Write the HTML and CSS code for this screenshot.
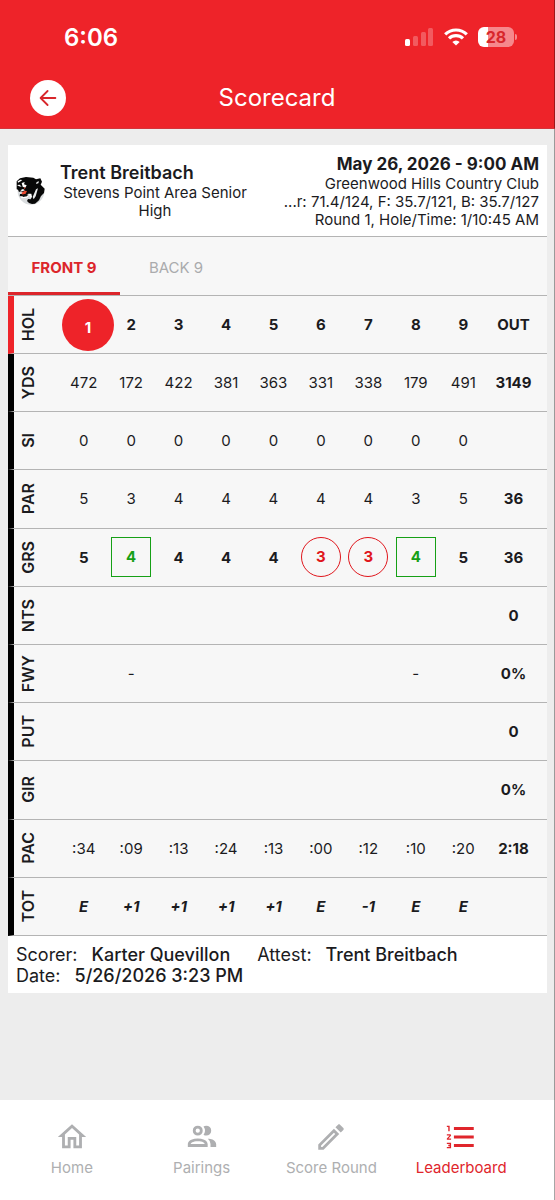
FILE: index.html
```html
<!DOCTYPE html>
<html lang="en">
<head>
  <meta charset="UTF-8" />
  <title>Scorecard</title>
  <meta name="viewport" content="width=device-width, initial-scale=1.0" />
  <link rel="stylesheet" href="styles.css">
</head>
<body>
  <header class="header">
    <div class="status-bar">
      <span class="clock">6:06</span>
      <div class="status-icons">
        <svg width="29" height="19" viewBox="0 0 29 19" fill="#fff">
          <rect x="0" y="11" width="5" height="7" rx="1.5" />
          <g opacity="0.25">
            <rect x="8" y="8" width="5" height="10" rx="1.5" />
            <rect x="16" y="4" width="5" height="14" rx="1.5" />
            <rect x="23" y="0" width="5" height="18" rx="1.5" />
          </g>
        </svg>
        <svg width="24" height="18" viewBox="0 0 24 18" fill="none" stroke="#fff" stroke-width="3.2">
          <path d="M1.2 6.4a15.5 15.5 0 0 1 21.6 0" />
          <path d="M5 10.4a10 10 0 0 1 14 0" />
          <path d="M12 17.6L8.3 13.9a5.3 5.3 0 0 1 7.4 0z" fill="#fff" stroke="none" />
        </svg>
        <div class="battery"><span class="battery-level">28</span></div>
      </div>
    </div>
    <div class="title-bar">
      <button type="button" class="back" aria-label="Back">
        <svg width="18" height="18" viewBox="0 0 18 18" fill="none" stroke="#d8262b" stroke-width="1.8" stroke-linecap="round" stroke-linejoin="round">
          <path d="M16.4 9H1.8M8.6 2L1.6 9l7 7" />
        </svg>
      </button>
      <h1>Scorecard</h1>
    </div>
  </header>

  <main class="main">
    <section class="card">
      <div class="card-head">
        <svg class="logo" viewBox="0 0 90 90">
          <circle cx="45" cy="46" r="40" fill="#d9dcde" />
          <path d="M8 8L70 6l18 22-20 36-22 6-10-20-36-8z" fill="#fff" />
          <path d="M2 16L12 7l18-4 22 2 8 5 13-3 5 10-4 9 12 12-2 13-9 9-6 13-12 10-9 1-9-3-6-6 3-6 8 1 4-8-2-9-9 0-9 7-8 1-3 5-6-5 1-7 7 0 3-5-7-3-6 2-3-7-4-1z" fill="#080808" />
          <path d="M5 16l8-5 6 1-5 4-8 4zM3 27l8-1 6 6-8-1zM17 21l9-3-2 7 8 3-4 7-8-3zM13 43l8-4 6 4-8 3z" fill="#fff" />
          <path d="M50 63l10-23 6-3-7 24-6 9zM62 18l7-2-2 6-7 2z" fill="#e9ebec" />
          <path d="M16 51l10-7 7 1-4 8-9 3zM23 35l5-1-1 6z" fill="#e8482f" />
          <path d="M10 61l9 0 12-5 7 4-5 5-16 2z" fill="#fff" />
          <path d="M17 58l10-4 9 2-3 5-12 2z" fill="#111" />
        </svg>
        <div class="player">
          <h2>Trent Breitbach</h2>
          <p>Stevens Point Area Senior High</p>
        </div>
        <div class="event">
          <h2>May 26, 2026 - 9:00 AM</h2>
          <p>Greenwood Hills Country Club</p>
          <p>...r: 71.4/124, F: 35.7/121, B: 35.7/127</p>
          <p>Round 1, Hole/Time: 1/10:45 AM</p>
        </div>
      </div>

      <div class="tabs">
        <button type="button" class="tab active">FRONT 9</button>
        <button type="button" class="tab">BACK 9</button>
      </div>

      <table class="scores">
        <thead>
          <tr>
            <th class="label" scope="col"><span>HOL</span></th>
            <th class="current" scope="col"><span>1</span></th>
            <th scope="col">2</th><th scope="col">3</th><th scope="col">4</th><th scope="col">5</th><th scope="col">6</th><th scope="col">7</th><th scope="col">8</th><th scope="col">9</th>
            <th class="out" scope="col">OUT</th>
          </tr>
        </thead>
        <tbody>
          <tr>
            <th class="label" scope="row"><span>YDS</span></th>
            <td>472</td><td>172</td><td>422</td><td>381</td><td>363</td><td>331</td><td>338</td><td>179</td><td>491</td>
            <td class="out">3149</td>
          </tr>
          <tr>
            <th class="label" scope="row"><span>SI</span></th>
            <td>0</td><td>0</td><td>0</td><td>0</td><td>0</td><td>0</td><td>0</td><td>0</td><td>0</td>
            <td class="out"></td>
          </tr>
          <tr>
            <th class="label" scope="row"><span>PAR</span></th>
            <td>5</td><td>3</td><td>4</td><td>4</td><td>4</td><td>4</td><td>4</td><td>3</td><td>5</td>
            <td class="out">36</td>
          </tr>
          <tr class="gross">
            <th class="label" scope="row"><span>GRS</span></th>
            <td>5</td>
            <td><span class="mark bogey">4</span></td>
            <td>4</td><td>4</td><td>4</td>
            <td><span class="mark birdie">3</span></td>
            <td><span class="mark birdie">3</span></td>
            <td><span class="mark bogey">4</span></td>
            <td>5</td>
            <td class="out">36</td>
          </tr>
          <tr>
            <th class="label" scope="row"><span>NTS</span></th>
            <td></td><td></td><td></td><td></td><td></td><td></td><td></td><td></td><td></td>
            <td class="out">0</td>
          </tr>
          <tr>
            <th class="label" scope="row"><span>FWY</span></th>
            <td></td><td>-</td><td></td><td></td><td></td><td></td><td></td><td>-</td><td></td>
            <td class="out">0%</td>
          </tr>
          <tr>
            <th class="label" scope="row"><span>PUT</span></th>
            <td></td><td></td><td></td><td></td><td></td><td></td><td></td><td></td><td></td>
            <td class="out">0</td>
          </tr>
          <tr>
            <th class="label" scope="row"><span>GIR</span></th>
            <td></td><td></td><td></td><td></td><td></td><td></td><td></td><td></td><td></td>
            <td class="out">0%</td>
          </tr>
          <tr>
            <th class="label" scope="row"><span>PAC</span></th>
            <td>:34</td><td>:09</td><td>:13</td><td>:24</td><td>:13</td><td>:00</td><td>:12</td><td>:10</td><td>:20</td>
            <td class="out">2:18</td>
          </tr>
          <tr class="total">
            <th class="label" scope="row"><span>TOT</span></th>
            <td>E</td><td>+1</td><td>+1</td><td>+1</td><td>+1</td><td>E</td><td>-1</td><td>E</td><td>E</td>
            <td class="out"></td>
          </tr>
        </tbody>
      </table>

      <div class="signoff">
        <div><span>Scorer:</span><strong>Karter Quevillon</strong></div>
        <div><span>Attest:</span><strong>Trent Breitbach</strong></div>
        <div><span>Date:</span><strong>5/26/2026 3:23 PM</strong></div>
      </div>
    </section>
  </main>

  <nav class="nav">
    <a href="#home">
      <svg viewBox="0 0 24 24" fill="currentColor"><path d="M12 5.690l5 4.500V18h-2v-6H9v6H7v-7.810l5-4.500M12 3L2 12h3v8h6v-6h2v6h6v-8h3L12 3z" /></svg>
      Home
    </a>
    <a href="#pairings">
      <svg viewBox="0 0 24 24" fill="currentColor"><path d="M13.070 10.410a5 5 0 0 0 0-5.820A3.390 3.390 0 0 1 15 4a3.500 3.500 0 0 1 0 7 3.390 3.390 0 0 1-1.930-.59zM5.500 7.500A3.500 3.500 0 1 1 9 11a3.500 3.500 0 0 1-3.500-3.500zm2 0A1.500 1.500 0 1 0 9 6a1.500 1.500 0 0 0-1.500 1.500zM16 17v2H2v-2s0-4 7-4 7 4 7 4zm-2 0c-.14-.78-1.330-2-5-2s-4.930 1.310-5 2M15.950 13A5.320 5.320 0 0 1 18 17v2h4v-2s0-3.630-6.060-4z" /></svg>
      Pairings
    </a>
    <a href="#score">
      <svg viewBox="0 0 24 24" fill="currentColor"><path d="M14.060 9.020l.92.92L5.920 19H5v-.92l9.060-9.060M17.660 3c-.25 0-.51.1-.7.29l-1.830 1.830 3.750 3.750 1.830-1.830c.39-.39.39-1.020 0-1.410l-2.340-2.340c-.2-.2-.45-.29-.71-.29zm-3.600 3.190L3 17.250V21h3.750L17.810 9.940l-3.750-3.750z" /></svg>
      Score Round
    </a>
    <a href="#leaderboard" class="active">
      <svg viewBox="0 0 24 24" fill="currentColor"><path d="M7 13v-2h14v2H7zm0 6v-2h14v2H7zM7 7V5h14v2H7zM3 8V5H2V4h2v4H3zm-1 9v-1h3v4H2v-1h2v-.5H3v-1h1V17H2zm2.250-7a.75.75 0 0 1 .75.75c0 .2-.08.39-.21.52L3.120 13H5v1H2v-.92L4 11H2v-1h2.250z" /></svg>
      Leaderboard
    </a>
  </nav>
</body>
</html>
```
FILE: styles.css
```css
* {
  box-sizing: border-box;
}

body {
  font-family: Inter, 'Liberation Sans', sans-serif;
  margin: 0;
  min-height: 100vh;
  display: flex;
  flex-direction: column;
  background: #ededed;
  color: #1b1b1e;
}

h1, h2, p {
  margin: 0;
}

button {
  font-family: inherit;
  border: none;
  padding: 0;
  cursor: pointer;
}

.header, .main, .nav {
  border-right: 1px solid rgba(0, 0, 0, 0.35);
}

/* header */
.header {
  background: #ee2329;
  color: white;
  border-bottom: 1px solid #d4343a;
  padding-bottom: 12px;
}

.status-bar {
  display: flex;
  justify-content: space-between;
  align-items: center;
  height: 74px;
  padding: 0 40px 0 64px;
}

.clock {
  font-size: 24px;
  font-weight: 600;
}

.status-icons {
  display: flex;
  align-items: center;
  gap: 10px;
}

.battery {
  position: relative;
  width: 36px;
  height: 20px;
  border-radius: 6px;
  background: linear-gradient(to right, #fff 28%, #f6888c 28%);
  color: #d8262b;
  text-align: center;
}

.battery::after {
  content: '';
  position: absolute;
  left: 37px;
  top: 7px;
  width: 2px;
  height: 6px;
  border-radius: 0 2px 2px 0;
  background: #f6888c;
}

.battery-level {
  font-size: 16px;
  line-height: 20px;
  font-weight: 700;
}

.title-bar {
  display: grid;
  grid-template-columns: 36px 1fr 36px;
  align-items: center;
  padding: 6px 30px 0;
}

.back {
  display: flex;
  align-items: center;
  justify-content: center;
  width: 36px;
  height: 36px;
  border-radius: 50%;
  background: white;
}

h1 {
  font-size: 24px;
  line-height: 32px;
  font-weight: 400;
  text-align: center;
}

/* card */
.main {
  flex: 1;
  padding: 16px 7px 16px 8px;
}

.card {
  background: white;
}

.card-head {
  display: flex;
  align-items: center;
  height: 92px;
  padding: 0 8px;
  border-bottom: 1px solid #b4b4b4;
}

.logo {
  width: 30px;
  height: 30px;
  flex: none;
}

h2 {
  font-size: 18px;
  line-height: 22px;
  font-weight: 600;
}

.card-head p {
  font-size: 15px;
  line-height: 18px;
}

.player {
  width: 190px;
  margin-left: 14px;
}

.player p {
  text-align: center;
}

.event {
  flex: 1;
  text-align: right;
  white-space: nowrap;
}

.event h2 {
  font-size: 17px;
  font-weight: 700;
}

.tabs {
  display: flex;
  height: 59px;
  background: #f7f7f7;
  border-bottom: 1px solid #b4b4b4;
}

.tab {
  width: 112px;
  padding-top: 5px;
  background: none;
  border-bottom: 3px solid transparent;
  font-size: 15px;
  color: #aaabad;
}

.tab.active {
  color: #dc262b;
  border-color: #dc262b;
  font-weight: 700;
}

/* score table */
.scores {
  width: 100%;
  height: 640px;
  table-layout: fixed;
  border-collapse: separate;
  border-spacing: 0;
  background: #f7f7f7;
  font-size: 15px;
}

.scores th, .scores td {
  height: 58px;
  padding: 0;
  text-align: center;
  vertical-align: middle;
  border-bottom: 1px solid #b4b4b4;
}

.scores .label {
  width: 52px;
  padding-left: 4px;
  font-size: 16px;
  font-weight: 600;
  border-left: 6px solid black;
}

.scores thead .label {
  border-left-color: #ee2329;
}

.label span {
  display: block;
  width: 20px;
  line-height: 20px;
  text-align: center;
  writing-mode: vertical-rl;
  transform: rotate(180deg);
}

.scores th, .gross td, .total td, .scores .out {
  font-weight: 700;
}

.scores .out {
  width: 60px;
  padding-right: 7px;
}

/* selected hole is a little wider than its column */
.scores .current {
  padding-left: 2px;
}

.current span {
  display: block;
  width: 52px;
  height: 52px;
  padding-top: 3px;
  line-height: 52px;
  border-radius: 50%;
  background: #ee2329;
  color: white;
}

.mark {
  display: block;
  width: 40px;
  margin: 0 auto;
  line-height: 38px;
  border: 1px solid;
}

.bogey {
  color: #16a016;
}

.birdie {
  color: #e0161c;
  border-radius: 50%;
}

.total td {
  font-style: italic;
}

/* scorer and attest */
.signoff {
  display: flex;
  flex-wrap: wrap;
  column-gap: 27px;
  padding: 8px 8px 7px;
  font-size: 18px;
  line-height: 21px;
}

.signoff div {
  display: flex;
  gap: 14px;
}

.signoff strong {
  font-weight: 500;
}

/* bottom navigation */
.nav {
  display: flex;
  height: 100px;
  padding: 20px 28px 0 7px;
  background: white;
}

.nav a {
  flex: 1;
  display: flex;
  flex-direction: column;
  align-items: center;
  gap: 4px;
  font-size: 15px;
  line-height: 20px;
  color: #aeafb1;
  text-decoration: none;
}

.nav svg {
  width: 34px;
  height: 34px;
}

.nav .active {
  color: #e0262c;
}
```
